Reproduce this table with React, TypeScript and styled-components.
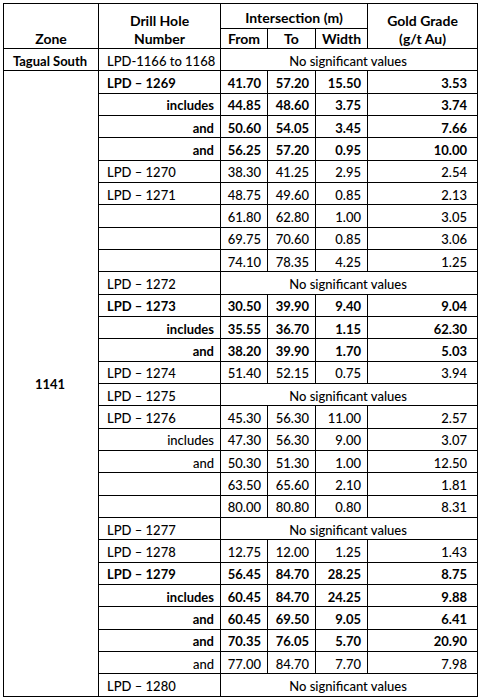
import React from 'react';
import styled, { createGlobalStyle } from 'styled-components';

const GlobalStyle = createGlobalStyle`
  body {
    margin: 0;
    background: #fff;
  }
`;

// 표를 감싸는 바깥 여백
const Page = styled.div`
  padding: 3px 0 0 3px;
  font-family: 'Lato', 'Liberation Sans', sans-serif;
  font-size: 13px;
  color: #000;
`;

const Table = styled.table`
  border-collapse: collapse;
  table-layout: fixed;
  width: 475px;
`;

const HeadCell = styled.th<{ $pb?: number }>`
  border: 1px solid #000;
  font-weight: 700;
  font-size: 14px;
  text-align: center;
  vertical-align: bottom;
  padding: 0 4px ${(p) => p.$pb ?? 0}px;
  line-height: 18px;
`;

const HeadRow = styled.tr<{ $h: number }>`
  height: ${(p) => p.$h}px;
`;

const Row = styled.tr`
  height: 22.34px;
`;

const Cell = styled.td<{ $align?: string; $bold?: boolean; $pad?: number }>`
  border: 1px solid #000;
  font-weight: ${(p) => (p.$bold ? 700 : 500)};
  text-align: ${(p) => p.$align || 'right'};
  padding: 2px ${(p) => p.$pad ?? 6}px 0 ${(p) => (p.$align === 'left' ? 8 : 4)}px;
  white-space: nowrap;
  vertical-align: middle;
`;

const ZoneCell = styled(Cell)`
  text-align: center;
  font-weight: 700;
`;

type Hole = {
  hole: string;
  sub?: boolean;
  bold?: boolean;
  values?: [string, string, string, string];
};

const holes: Hole[] = [
  { hole: 'LPD – 1269', bold: true, values: ['41.70', '57.20', '15.50', '3.53'] },
  { hole: 'includes', sub: true, bold: true, values: ['44.85', '48.60', '3.75', '3.74'] },
  { hole: 'and', sub: true, bold: true, values: ['50.60', '54.05', '3.45', '7.66'] },
  { hole: 'and', sub: true, bold: true, values: ['56.25', '57.20', '0.95', '10.00'] },
  { hole: 'LPD – 1270', values: ['38.30', '41.25', '2.95', '2.54'] },
  { hole: 'LPD – 1271', values: ['48.75', '49.60', '0.85', '2.13'] },
  { hole: '', values: ['61.80', '62.80', '1.00', '3.05'] },
  { hole: '', values: ['69.75', '70.60', '0.85', '3.06'] },
  { hole: '', values: ['74.10', '78.35', '4.25', '1.25'] },
  { hole: 'LPD – 1272' },
  { hole: 'LPD – 1273', bold: true, values: ['30.50', '39.90', '9.40', '9.04'] },
  { hole: 'includes', sub: true, bold: true, values: ['35.55', '36.70', '1.15', '62.30'] },
  { hole: 'and', sub: true, bold: true, values: ['38.20', '39.90', '1.70', '5.03'] },
  { hole: 'LPD – 1274', values: ['51.40', '52.15', '0.75', '3.94'] },
  { hole: 'LPD – 1275' },
  { hole: 'LPD – 1276', values: ['45.30', '56.30', '11.00', '2.57'] },
  { hole: 'includes', sub: true, values: ['47.30', '56.30', '9.00', '3.07'] },
  { hole: 'and', sub: true, values: ['50.30', '51.30', '1.00', '12.50'] },
  { hole: '', values: ['63.50', '65.60', '2.10', '1.81'] },
  { hole: '', values: ['80.00', '80.80', '0.80', '8.31'] },
  { hole: 'LPD – 1277' },
  { hole: 'LPD – 1278', values: ['12.75', '12.00', '1.25', '1.43'] },
  { hole: 'LPD – 1279', bold: true, values: ['56.45', '84.70', '28.25', '8.75'] },
  { hole: 'includes', sub: true, bold: true, values: ['60.45', '84.70', '24.25', '9.88'] },
  { hole: 'and', sub: true, bold: true, values: ['60.45', '69.50', '9.05', '6.41'] },
  { hole: 'and', sub: true, bold: true, values: ['70.35', '76.05', '5.70', '20.90'] },
  { hole: 'and', sub: true, values: ['77.00', '84.70', '7.70', '7.98'] },
  { hole: 'LPD – 1280' },
];

function Values({ values, bold }: { values?: Hole['values']; bold?: boolean }) {
  if (!values) {
    return (
      <Cell colSpan={4} $align="center">
        No significant values
      </Cell>
    );
  }
  return (
    <>
      <Cell $bold={bold}>{values[0]}</Cell>
      <Cell $bold={bold}>{values[1]}</Cell>
      <Cell $bold={bold}>{values[2]}</Cell>
      <Cell $bold={bold} $pad={10}>
        {values[3]}
      </Cell>
    </>
  );
}

export default function App() {
  return (
    <Page>
      <GlobalStyle />
      <Table>
        <colgroup>
          <col style={{ width: 95 }} />
          <col style={{ width: 122 }} />
          <col style={{ width: 47 }} />
          <col style={{ width: 48 }} />
          <col style={{ width: 52 }} />
          <col style={{ width: 110 }} />
        </colgroup>
        <thead>
          <HeadRow $h={25}>
            <HeadCell rowSpan={2}>Zone</HeadCell>
            <HeadCell rowSpan={2}>
              Drill Hole
              <br />
              Number
            </HeadCell>
            <HeadCell colSpan={3} $pb={1}>
              Intersection (m)
            </HeadCell>
            <HeadCell rowSpan={2}>
              Gold Grade
              <br />
              (g/t Au)
            </HeadCell>
          </HeadRow>
          <HeadRow $h={20}>
            <HeadCell>From</HeadCell>
            <HeadCell>To</HeadCell>
            <HeadCell>Width</HeadCell>
          </HeadRow>
        </thead>
        <tbody>
          <Row>
            <ZoneCell>Tagual South</ZoneCell>
            <Cell $align="left">LPD-1166 to 1168</Cell>
            <Values />
          </Row>
          {holes.map((h, i) => (
            <Row key={i}>
              {i === 0 && <ZoneCell rowSpan={holes.length}>1141</ZoneCell>}
              <Cell $align={h.sub ? 'right' : 'left'} $bold={h.bold}>
                {h.hole}
              </Cell>
              <Values values={h.values} bold={h.bold} />
            </Row>
          ))}
        </tbody>
      </Table>
    </Page>
  );
}
